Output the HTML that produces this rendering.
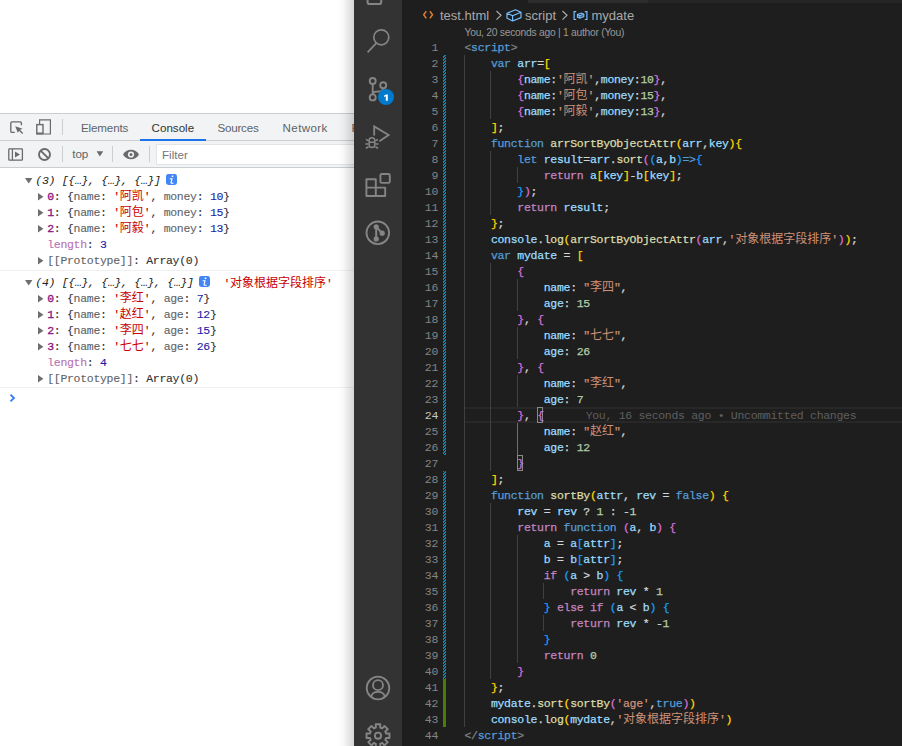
<!DOCTYPE html>
<html><head><meta charset="utf-8"><title>console / editor</title>
<style>
*{box-sizing:border-box}
html,body{margin:0;padding:0}
body{width:902px;height:746px;overflow:hidden;position:relative;background:#fff;font-family:"Liberation Sans",sans-serif}
.ab{position:absolute}
#dt{position:absolute;left:0;top:0;width:354px;height:746px;overflow:hidden;background:#fff}
#dt .bar{position:absolute;left:0;width:354px;background:#f1f3f4;border-top:1px solid #cbcdd1}
.tab{position:absolute;top:121px;font-size:11.6px;line-height:14px;color:#5f6368;white-space:nowrap}
.vs{position:absolute;width:1px;background:#cbcdd1}
.cr{position:absolute;height:16px;line-height:16px;font-family:"Liberation Mono","Noto Sans CJK SC",monospace;font-size:11.5px;letter-spacing:-0.3px;color:#303030;white-space:pre;padding-top:1px;-webkit-text-stroke:0.1px}
.ch{font-style:italic;color:#222;-webkit-text-stroke:0}
.ci{color:#881280;-webkit-text-stroke:0.3px}
.cn{color:#5f6368}
.cs{color:#c80000}
.cv{color:#1a1aa6}
.cl2{color:#b871b3}
.cp{color:#5f6368}
.zh{font-family:"Liberation Mono","Noto Sans CJK SC",monospace;font-size:12px;letter-spacing:0;-webkit-text-stroke:0}
.sep{position:absolute;left:0;width:354px;height:1px;background:#f0f0f0}
.inf{position:absolute;width:11px;height:11px;border-radius:2.5px;background:#4285f4;color:#fff;text-align:center;font:italic bold 10px/10px "Liberation Mono",monospace}
#shadow{position:absolute;left:338px;top:0;width:16px;height:746px;background:linear-gradient(90deg,rgba(0,0,0,0),rgba(0,0,0,.03) 35%,rgba(0,0,0,.16))}
#vs{position:absolute;left:354px;top:0;width:548px;height:746px;background:#1e1e1e;overflow:hidden}
#ab{position:absolute;left:0;top:0;width:48px;height:746px;background:#333}
#ed{position:absolute;left:-354px;top:0;width:902px;height:746px}
.bc{position:absolute;top:7px;height:18px;line-height:18px;font-size:13px;color:#a9a9a9;white-space:nowrap}
.lens{position:absolute;left:464.5px;top:26px;height:14px;line-height:14px;font-size:10.3px;letter-spacing:-0.26px;color:#999;white-space:nowrap}
.ln{position:absolute;left:402px;width:36px;height:16px;line-height:16px;padding-top:1px;text-align:right;font-family:"Liberation Mono",monospace;font-size:11.5px;letter-spacing:-0.3px;color:#858585}
.ln.cur{color:#c6c6c6}
.cl{position:absolute;left:464.5px;height:16px;line-height:16px;padding-top:1px;font-family:"Liberation Mono","Noto Sans CJK SC",monospace;font-size:11.5px;letter-spacing:-0.3px;color:#d4d4d4;white-space:pre;-webkit-text-stroke:0.25px}
.t{color:#808080}.k{color:#569cd6}.c{color:#c586c0}.v{color:#9cdcfe}.f{color:#dcdcaa}.s{color:#ce9178}.n{color:#b5cea8}.p{color:#d4d4d4}
.b1{color:#ffd700}.b2{color:#da70d6}.b3{color:#179fff}
.bm{position:absolute;width:6px;height:16px;border:1px solid #888;background:rgba(0,100,0,.1)}
.gh{color:#5e5e5e;margin-left:41.9px;-webkit-text-stroke:0}
.ig{position:absolute;width:1px;background:#404040}
.iga{background:#707070}
.gm{position:absolute;left:443px;width:3px;background:repeating-linear-gradient(-45deg,#1b81a8 0,#1b81a8 1.4px,#1e3c48 1.4px,#1e3c48 2.83px)}
.ga{position:absolute;left:443px;width:3px;background:#487e02}
#hl{position:absolute;left:465px;top:407px;width:437px;height:16px;border-top:2px solid #282828;border-bottom:2px solid #282828}
</style></head><body>
<div id="dt">
<div class="bar" style="top:113px;height:28px"></div><div class="bar" style="top:140px;height:27px"></div><div class="bar" style="top:167px;height:1px;background:#fff"></div><svg class="ab" style="left:0;top:113px" width="354" height="55" viewBox="0 113 354 55" fill="none" stroke="#6a6a6a" stroke-width="1.5"><path d="M14.8 132.4H12Q10.8 132.4 10.8 131.2V123Q10.8 121.8 12 121.8H20.2Q21.4 121.8 21.4 123V125.2" stroke-width="1.35"/><path d="M15.2 126.2L22.6 128.7L19.7 130L17.8 132.8Z" fill="#6a6a6a" stroke="none"/><path d="M19 129.8L22.7 133.5" stroke-width="1.4"/><path d="M39.6 124V119.8H50.4V134H43.6" stroke-width="1.2"/><rect x="36.8" y="124.6" width="6.2" height="9.4" stroke-width="1.4"/><path d="M36.8 133.2H43" stroke-width="1.4"/><rect x="8.8" y="148.8" width="13.6" height="11.4" rx="0.6" stroke-width="1.3"/><path d="M12.4 148.8V160.2" stroke-width="1.3"/><path d="M15 151.4L20 154.5L15 157.6Z" fill="#6a6a6a" stroke="none"/><circle cx="44.5" cy="154.5" r="5.5" stroke-width="1.9"/><path d="M40.6 150.6L48.4 158.4" stroke-width="1.9"/><path d="M123 154.5C126 148.2 136 148.2 139 154.5C136 160.8 126 160.8 123 154.5Z" fill="#6a6a6a" stroke="none"/><circle cx="131" cy="154.5" r="3.1" fill="#f1f3f4" stroke="none"/><circle cx="131" cy="154.5" r="1.5" fill="#6a6a6a" stroke="none"/><path d="M96.6 151.2H103.2L99.9 156.4Z" fill="#6a6a6a" stroke="none"/></svg><div class="vs" style="left:62px;top:119px;height:16px"></div><div class="vs" style="left:62px;top:146px;height:16px"></div><div class="vs" style="left:112px;top:146px;height:16px"></div><div class="vs" style="left:149px;top:146px;height:16px"></div><div class="tab" style="left:81px;letter-spacing:-0.14px">Elements</div><div class="tab" style="left:151.6px;color:#333">Console</div><div class="tab" style="left:217.4px;letter-spacing:-0.2px">Sources</div><div class="tab" style="left:282.6px;letter-spacing:0.37px">Network</div><div class="tab" style="left:351.6px">Performance</div><div class="ab" style="left:140px;top:139px;width:66px;height:2px;background:#1a73e8"></div><div class="tab" style="left:72.2px;top:147px">top</div><div class="ab" style="left:156px;top:144px;width:220px;height:21px;background:#fff;border:1px solid #e3e4e6"></div><div class="tab" style="left:162px;top:148px;color:#757575">Filter</div>
<svg class="ab" style="left:25px;top:178px" width="8" height="6" viewBox="0 0 8 6"><path d="M0 0H7.4L3.7 5.6Z" fill="#6e6e6e"/></svg>
<div class="cr" style="top:172px;left:35.3px"><span class="ch">(3) [{…}, {…}, {…}]</span></div>
<svg class="ab" style="left:166px;top:174px" width="11" height="11" viewBox="0 0 11 11"><rect width="11" height="11" rx="2.4" fill="#4285f4"/><rect x="5.7" y="1.5" width="1.6" height="1.6" fill="#fff"/><path d="M3.7 4.7H6L5.1 8.4Q4.9 9.2 5.8 9.2H7.6" fill="none" stroke="#fff" stroke-width="1.15"/></svg>
<svg class="ab" style="left:38px;top:192.5px" width="6" height="8" viewBox="0 0 6 8"><path d="M0 0V7.4L5.4 3.7Z" fill="#6e6e6e"/></svg>
<div class="cr" style="top:188px;left:47.2px"><span class="ci">0</span>: {<span class="cn">name</span>: <span class="cs">'<span class="zh">阿凯</span>'</span>, <span class="cn">money</span>: <span class="cv">10</span>}</div>
<svg class="ab" style="left:38px;top:208.5px" width="6" height="8" viewBox="0 0 6 8"><path d="M0 0V7.4L5.4 3.7Z" fill="#6e6e6e"/></svg>
<div class="cr" style="top:204px;left:47.2px"><span class="ci">1</span>: {<span class="cn">name</span>: <span class="cs">'<span class="zh">阿包</span>'</span>, <span class="cn">money</span>: <span class="cv">15</span>}</div>
<svg class="ab" style="left:38px;top:224.5px" width="6" height="8" viewBox="0 0 6 8"><path d="M0 0V7.4L5.4 3.7Z" fill="#6e6e6e"/></svg>
<div class="cr" style="top:220px;left:47.2px"><span class="ci">2</span>: {<span class="cn">name</span>: <span class="cs">'<span class="zh">阿毅</span>'</span>, <span class="cn">money</span>: <span class="cv">13</span>}</div>
<div class="cr" style="top:236px;left:47.2px"><span class="cl2">length</span>: <span class="cv">3</span></div>
<svg class="ab" style="left:38px;top:256.5px" width="6" height="8" viewBox="0 0 6 8"><path d="M0 0V7.4L5.4 3.7Z" fill="#6e6e6e"/></svg>
<div class="cr" style="top:252px;left:47.2px"><span class="cp">[[Prototype]]</span>: Array(0)</div>
<div class="sep" style="top:270px"></div>
<svg class="ab" style="left:25px;top:280px" width="8" height="6" viewBox="0 0 8 6"><path d="M0 0H7.4L3.7 5.6Z" fill="#6e6e6e"/></svg>
<div class="cr" style="top:274px;left:35.3px"><span class="ch">(4) [{…}, {…}, {…}, {…}]</span></div>
<svg class="ab" style="left:199px;top:276px" width="11" height="11" viewBox="0 0 11 11"><rect width="11" height="11" rx="2.4" fill="#4285f4"/><rect x="5.7" y="1.5" width="1.6" height="1.6" fill="#fff"/><path d="M3.7 4.7H6L5.1 8.4Q4.9 9.2 5.8 9.2H7.6" fill="none" stroke="#fff" stroke-width="1.15"/></svg>
<div class="cr" style="top:275px;left:223.4px"><span class="cs">'<span class="zh">对象根据字段排序</span>'</span></div>
<svg class="ab" style="left:38px;top:294.5px" width="6" height="8" viewBox="0 0 6 8"><path d="M0 0V7.4L5.4 3.7Z" fill="#6e6e6e"/></svg>
<div class="cr" style="top:290px;left:47.2px"><span class="ci">0</span>: {<span class="cn">name</span>: <span class="cs">'<span class="zh">李红</span>'</span>, <span class="cn">age</span>: <span class="cv">7</span>}</div>
<svg class="ab" style="left:38px;top:310.5px" width="6" height="8" viewBox="0 0 6 8"><path d="M0 0V7.4L5.4 3.7Z" fill="#6e6e6e"/></svg>
<div class="cr" style="top:306px;left:47.2px"><span class="ci">1</span>: {<span class="cn">name</span>: <span class="cs">'<span class="zh">赵红</span>'</span>, <span class="cn">age</span>: <span class="cv">12</span>}</div>
<svg class="ab" style="left:38px;top:326.5px" width="6" height="8" viewBox="0 0 6 8"><path d="M0 0V7.4L5.4 3.7Z" fill="#6e6e6e"/></svg>
<div class="cr" style="top:322px;left:47.2px"><span class="ci">2</span>: {<span class="cn">name</span>: <span class="cs">'<span class="zh">李四</span>'</span>, <span class="cn">age</span>: <span class="cv">15</span>}</div>
<svg class="ab" style="left:38px;top:342.5px" width="6" height="8" viewBox="0 0 6 8"><path d="M0 0V7.4L5.4 3.7Z" fill="#6e6e6e"/></svg>
<div class="cr" style="top:338px;left:47.2px"><span class="ci">3</span>: {<span class="cn">name</span>: <span class="cs">'<span class="zh">七七</span>'</span>, <span class="cn">age</span>: <span class="cv">26</span>}</div>
<div class="cr" style="top:354px;left:47.2px"><span class="cl2">length</span>: <span class="cv">4</span></div>
<svg class="ab" style="left:38px;top:374.5px" width="6" height="8" viewBox="0 0 6 8"><path d="M0 0V7.4L5.4 3.7Z" fill="#6e6e6e"/></svg>
<div class="cr" style="top:370px;left:47.2px"><span class="cp">[[Prototype]]</span>: Array(0)</div>
<div class="sep" style="top:387px"></div>
<svg class="ab" style="left:9px;top:393px" width="8" height="10" viewBox="0 0 8 10"><path d="M1.5 1.6L5 5L1.5 8.4" fill="none" stroke="#367cf1" stroke-width="1.8"/></svg>
</div>
<div id="shadow"></div>
<div id="vs">
<div id="ed">
<div class="ab" style="left:528px;top:0;width:374px;height:3px;background:#252526"></div>
<div class="ab" style="left:528px;top:0;width:120px;height:3px;background:#2d2d2d"></div>
<svg class="ab" style="left:422.4px;top:9px" width="13" height="12" viewBox="0 0 13 12" fill="none" stroke="#e37933" stroke-width="1.5"><path d="M4.3 2.2L1.7 5.8L4.3 9.4M7.9 2.2L10.5 5.8L7.9 9.4"/></svg><div class="bc" style="left:440px">test.html</div><svg class="ab" style="left:495px;top:10px" width="8" height="11" viewBox="0 0 8 11" fill="none" stroke="#a9a9a9" stroke-width="1.2"><path d="M1.5 1L6 5.3L1.5 9.6"/></svg><svg class="ab" style="left:506px;top:9px" width="16" height="13" viewBox="0 0 16 13" fill="none" stroke="#75beff" stroke-width="1.2" stroke-linejoin="round"><path d="M1 4.2L9.5 0.8L15 3.2V8.6L6.6 12L1 9.2ZM1 4.2L6.6 6.8L15 3.2M6.6 6.8V12"/></svg><div class="bc" style="left:525px">script</div><svg class="ab" style="left:561px;top:10px" width="8" height="11" viewBox="0 0 8 11" fill="none" stroke="#a9a9a9" stroke-width="1.2"><path d="M1.5 1L6 5.3L1.5 9.6"/></svg><svg class="ab" style="left:572.5px;top:10px" width="15" height="11" viewBox="0 0 15 11" fill="none" stroke="#75beff" stroke-width="1.2"><path d="M3.2 1.7H1.1V9.5H3.2M11.8 1.7H13.9V9.5H11.8"/><path d="M4.4 4.6L8.4 3L10.8 4.1V6.6L6.8 8.2L4.4 7.1ZM4.4 4.6L6.8 5.7L10.8 4.1M6.8 5.7V8.2" stroke-width="1.1" fill="rgba(117,190,255,.35)"/></svg><div class="bc" style="left:591.5px">mydate</div>
<div class="lens">You, 20 seconds ago | 1 author (You)</div>
<div id="hl"></div><div class="bm" style="left:537px;top:407px"></div><div class="bm" style="left:517px;top:455px"></div>
<div class="ig" style="left:464px;top:55px;height:672px"></div><div class="ig" style="left:490px;top:71px;height:48px"></div><div class="ig" style="left:490px;top:151px;height:64px"></div><div class="ig" style="left:490px;top:263px;height:208px"></div><div class="ig" style="left:490px;top:503px;height:176px"></div><div class="ig" style="left:517px;top:167px;height:16px"></div><div class="ig" style="left:517px;top:279px;height:32px"></div><div class="ig" style="left:517px;top:327px;height:32px"></div><div class="ig" style="left:517px;top:375px;height:32px"></div><div class="ig" style="left:517px;top:535px;height:128px"></div><div class="ig iga" style="left:517px;top:423px;height:32px"></div><div class="ig" style="left:543px;top:583px;height:16px"></div><div class="ig" style="left:543px;top:615px;height:16px"></div>
<svg class="ab" style="left:443px;top:0" width="3" height="746" shape-rendering="crispEdges"><defs><pattern id="hp" width="3" height="3" patternUnits="userSpaceOnUse" patternTransform="translate(0 55)"><rect width="3" height="3" fill="#1b81a8"/><rect x="0" y="0" width="1" height="1" fill="#1e1e1e"/><rect x="2" y="1" width="1" height="1" fill="#1e1e1e"/><rect x="1" y="2" width="1" height="1" fill="#1e1e1e"/></pattern></defs><rect x="0" y="55" width="3" height="400" fill="url(#hp)"/><rect x="0" y="471" width="3" height="208" fill="url(#hp)"/><rect x="0" y="679" width="3" height="48" fill="#487e02"/></svg>
<div class="ln" style="top:39px">1</div>
<div class="cl" style="top:39px"><span class="t">&lt;</span><span class="k">script</span><span class="t">&gt;</span></div>
<div class="ln" style="top:55px">2</div>
<div class="cl" style="top:55px">    <span class="k">var</span> <span class="v">arr</span><span class="p">=</span><span class="b1">[</span></div>
<div class="ln" style="top:71px">3</div>
<div class="cl" style="top:71px">        <span class="b2">{</span><span class="v">name</span><span class="p">:</span><span class="s">'<span class="zh">阿凯</span>'</span><span class="p">,</span><span class="v">money</span><span class="p">:</span><span class="n">10</span><span class="b2">}</span><span class="p">,</span></div>
<div class="ln" style="top:87px">4</div>
<div class="cl" style="top:87px">        <span class="b2">{</span><span class="v">name</span><span class="p">:</span><span class="s">'<span class="zh">阿包</span>'</span><span class="p">,</span><span class="v">money</span><span class="p">:</span><span class="n">15</span><span class="b2">}</span><span class="p">,</span></div>
<div class="ln" style="top:103px">5</div>
<div class="cl" style="top:103px">        <span class="b2">{</span><span class="v">name</span><span class="p">:</span><span class="s">'<span class="zh">阿毅</span>'</span><span class="p">,</span><span class="v">money</span><span class="p">:</span><span class="n">13</span><span class="b2">}</span><span class="p">,</span></div>
<div class="ln" style="top:119px">6</div>
<div class="cl" style="top:119px">    <span class="b1">]</span><span class="p">;</span></div>
<div class="ln" style="top:135px">7</div>
<div class="cl" style="top:135px">    <span class="k">function</span> <span class="f">arrSortByObjectAttr</span><span class="b1">(</span><span class="v">arr</span><span class="p">,</span><span class="v">key</span><span class="b1">)</span><span class="b1">{</span></div>
<div class="ln" style="top:151px">8</div>
<div class="cl" style="top:151px">        <span class="k">let</span> <span class="v">result</span><span class="p">=</span><span class="v">arr</span><span class="p">.</span><span class="f">sort</span><span class="b2">(</span><span class="b3">(</span><span class="v">a</span><span class="p">,</span><span class="v">b</span><span class="b3">)</span><span class="k">=&gt;</span><span class="b3">{</span></div>
<div class="ln" style="top:167px">9</div>
<div class="cl" style="top:167px">            <span class="c">return</span> <span class="v">a</span><span class="b1">[</span><span class="v">key</span><span class="b1">]</span><span class="p">-</span><span class="v">b</span><span class="b1">[</span><span class="v">key</span><span class="b1">]</span><span class="p">;</span></div>
<div class="ln" style="top:183px">10</div>
<div class="cl" style="top:183px">        <span class="b3">}</span><span class="b2">)</span><span class="p">;</span></div>
<div class="ln" style="top:199px">11</div>
<div class="cl" style="top:199px">        <span class="c">return</span> <span class="v">result</span><span class="p">;</span></div>
<div class="ln" style="top:215px">12</div>
<div class="cl" style="top:215px">    <span class="b1">}</span><span class="p">;</span></div>
<div class="ln" style="top:231px">13</div>
<div class="cl" style="top:231px">    <span class="v">console</span><span class="p">.</span><span class="f">log</span><span class="b1">(</span><span class="f">arrSortByObjectAttr</span><span class="b2">(</span><span class="v">arr</span><span class="p">,</span><span class="s">'<span class="zh">对象根据字段排序</span>'</span><span class="b2">)</span><span class="b1">)</span><span class="p">;</span></div>
<div class="ln" style="top:247px">14</div>
<div class="cl" style="top:247px">    <span class="k">var</span> <span class="v">mydate</span><span class="p"> = </span><span class="b1">[</span></div>
<div class="ln" style="top:263px">15</div>
<div class="cl" style="top:263px">        <span class="b2">{</span></div>
<div class="ln" style="top:279px">16</div>
<div class="cl" style="top:279px">            <span class="v">name</span><span class="p">: </span><span class="s">"<span class="zh">李四</span>"</span><span class="p">,</span></div>
<div class="ln" style="top:295px">17</div>
<div class="cl" style="top:295px">            <span class="v">age</span><span class="p">: </span><span class="n">15</span></div>
<div class="ln" style="top:311px">18</div>
<div class="cl" style="top:311px">        <span class="b2">}</span><span class="p">, </span><span class="b2">{</span></div>
<div class="ln" style="top:327px">19</div>
<div class="cl" style="top:327px">            <span class="v">name</span><span class="p">: </span><span class="s">"<span class="zh">七七</span>"</span><span class="p">,</span></div>
<div class="ln" style="top:343px">20</div>
<div class="cl" style="top:343px">            <span class="v">age</span><span class="p">: </span><span class="n">26</span></div>
<div class="ln" style="top:359px">21</div>
<div class="cl" style="top:359px">        <span class="b2">}</span><span class="p">, </span><span class="b2">{</span></div>
<div class="ln" style="top:375px">22</div>
<div class="cl" style="top:375px">            <span class="v">name</span><span class="p">: </span><span class="s">"<span class="zh">李红</span>"</span><span class="p">,</span></div>
<div class="ln" style="top:391px">23</div>
<div class="cl" style="top:391px">            <span class="v">age</span><span class="p">: </span><span class="n">7</span></div>
<div class="ln cur" style="top:407px">24</div>
<div class="cl" style="top:407px">        <span class="b2">}</span><span class="p">, </span><span class="b2">{</span><span class="gh">You, 16 seconds ago • Uncommitted changes</span></div>
<div class="ln" style="top:423px">25</div>
<div class="cl" style="top:423px">            <span class="v">name</span><span class="p">: </span><span class="s">"<span class="zh">赵红</span>"</span><span class="p">,</span></div>
<div class="ln" style="top:439px">26</div>
<div class="cl" style="top:439px">            <span class="v">age</span><span class="p">: </span><span class="n">12</span></div>
<div class="ln" style="top:455px">27</div>
<div class="cl" style="top:455px">        <span class="b2">}</span></div>
<div class="ln" style="top:471px">28</div>
<div class="cl" style="top:471px">    <span class="b1">]</span><span class="p">;</span></div>
<div class="ln" style="top:487px">29</div>
<div class="cl" style="top:487px">    <span class="k">function</span> <span class="f">sortBy</span><span class="b1">(</span><span class="v">attr</span><span class="p">, </span><span class="v">rev</span><span class="p"> = </span><span class="k">false</span><span class="b1">)</span> <span class="b1">{</span></div>
<div class="ln" style="top:503px">30</div>
<div class="cl" style="top:503px">        <span class="v">rev</span><span class="p"> = </span><span class="v">rev</span><span class="p"> ? </span><span class="n">1</span><span class="p"> : -</span><span class="n">1</span></div>
<div class="ln" style="top:519px">31</div>
<div class="cl" style="top:519px">        <span class="c">return</span> <span class="k">function</span> <span class="b2">(</span><span class="v">a</span><span class="p">, </span><span class="v">b</span><span class="b2">)</span> <span class="b2">{</span></div>
<div class="ln" style="top:535px">32</div>
<div class="cl" style="top:535px">            <span class="v">a</span><span class="p"> = </span><span class="v">a</span><span class="b3">[</span><span class="v">attr</span><span class="b3">]</span><span class="p">;</span></div>
<div class="ln" style="top:551px">33</div>
<div class="cl" style="top:551px">            <span class="v">b</span><span class="p"> = </span><span class="v">b</span><span class="b3">[</span><span class="v">attr</span><span class="b3">]</span><span class="p">;</span></div>
<div class="ln" style="top:567px">34</div>
<div class="cl" style="top:567px">            <span class="c">if</span> <span class="b3">(</span><span class="v">a</span><span class="p"> &gt; </span><span class="v">b</span><span class="b3">)</span> <span class="b3">{</span></div>
<div class="ln" style="top:583px">35</div>
<div class="cl" style="top:583px">                <span class="c">return</span> <span class="v">rev</span><span class="p"> * </span><span class="n">1</span></div>
<div class="ln" style="top:599px">36</div>
<div class="cl" style="top:599px">            <span class="b3">}</span> <span class="c">else</span> <span class="c">if</span> <span class="b3">(</span><span class="v">a</span><span class="p"> &lt; </span><span class="v">b</span><span class="b3">)</span> <span class="b3">{</span></div>
<div class="ln" style="top:615px">37</div>
<div class="cl" style="top:615px">                <span class="c">return</span> <span class="v">rev</span><span class="p"> * -</span><span class="n">1</span></div>
<div class="ln" style="top:631px">38</div>
<div class="cl" style="top:631px">            <span class="b3">}</span></div>
<div class="ln" style="top:647px">39</div>
<div class="cl" style="top:647px">            <span class="c">return</span> <span class="n">0</span></div>
<div class="ln" style="top:663px">40</div>
<div class="cl" style="top:663px">        <span class="b2">}</span></div>
<div class="ln" style="top:679px">41</div>
<div class="cl" style="top:679px">    <span class="b1">}</span><span class="p">;</span></div>
<div class="ln" style="top:695px">42</div>
<div class="cl" style="top:695px">    <span class="v">mydate</span><span class="p">.</span><span class="f">sort</span><span class="b1">(</span><span class="f">sortBy</span><span class="b2">(</span><span class="s">'age'</span><span class="p">,</span><span class="k">true</span><span class="b2">)</span><span class="b1">)</span></div>
<div class="ln" style="top:711px">43</div>
<div class="cl" style="top:711px">    <span class="v">console</span><span class="p">.</span><span class="f">log</span><span class="b1">(</span><span class="v">mydate</span><span class="p">,</span><span class="s">'<span class="zh">对象根据字段排序</span>'</span><span class="b1">)</span></div>
<div class="ln" style="top:727px">44</div>
<div class="cl" style="top:727px"><span class="t">&lt;/</span><span class="k">script</span><span class="t">&gt;</span></div>
</div>
<div id="ab"><svg class="ab" style="left:0;top:0" width="48" height="746" viewBox="354 0 48 746" fill="none" stroke="#858585" stroke-width="1.7"><path d="M367.6 0V2.3Q367.6 4.1 369.4 4.1H379.4Q381.2 4.1 381.2 2.3V0" stroke-width="2"/><circle cx="381.3" cy="37.3" r="7.5"/><path d="M376.3 43.2L367.6 52.4"/><g stroke-width="1.9"><circle cx="372.7" cy="81" r="3"/><circle cx="372.7" cy="97.4" r="3"/><circle cx="383.2" cy="85.2" r="3"/><path d="M372.7 84V94.4M383.2 88.2C383.2 91.4 380.5 91.6 376.5 91.6C374.5 91.6 373 92.4 372.7 94"/></g><path d="M374.2 135.4V126.4L388.6 135.1L379.4 141.2" stroke-width="1.8"/><rect x="369.1" y="137.8" width="5.7" height="9.8" rx="2.85" stroke-width="1.5"/><path d="M369 142.2H375M368.5 140.7L365.9 139.4M368.6 144H365.4M368.5 146.8L365.9 148.3M375.4 140.7L378 139.4M375.3 144H378.5M375.4 146.8L378 148.3" stroke-width="1.6"/><path d="M366.4 179.2H375.8V196H366.4ZM375.8 187.6H385.2V196H375.8M366.4 187.6H375.8" stroke-linejoin="round" stroke-width="1.9"/><rect x="380.4" y="174" width="9.4" height="8.9" rx="1.4" stroke-width="1.9"/><circle cx="377.8" cy="232.8" r="11.3" stroke-width="1.9"/><path d="M376.2 226.8V238.9M376.2 226.8L382.2 233.2" stroke-width="2"/><g fill="#858585" stroke="none"><circle cx="376.2" cy="226.8" r="2.6"/><circle cx="376.2" cy="238.9" r="2.6"/><circle cx="382.2" cy="233.2" r="2.6"/></g><circle cx="378" cy="688" r="11.3" stroke-width="1.8"/><circle cx="378" cy="685.2" r="5" stroke-width="1.8"/><path d="M371 696.8C371.8 693.2 374.6 691.8 378 691.8C381.4 691.8 384.2 693.2 385 696.8" stroke-width="1.8"/><path d="M375.84 727.58 L375.68 724.23 L380.32 724.23 L380.16 727.58 L382.21 728.43 L384.46 725.95 L387.75 729.24 L385.27 731.49 L386.12 733.54 L389.47 733.38 L389.47 738.02 L386.12 737.86 L385.27 739.91 L387.75 742.16 L384.46 745.45 L382.21 742.97 L380.16 743.82 L380.32 747.17 L375.68 747.17 L375.84 743.82 L373.79 742.97 L371.54 745.45 L368.25 742.16 L370.73 739.91 L369.88 737.86 L366.53 738.02 L366.53 733.38 L369.88 733.54 L370.73 731.49 L368.25 729.24 L371.54 725.95 L373.79 728.43Z" stroke-width="1.9" stroke-linejoin="round"/><circle cx="378" cy="735.7" r="3.1" stroke-width="1.9"/></svg><svg class="ab" style="left:24px;top:89px" width="16" height="16" viewBox="378 89 16 16"><circle cx="386" cy="97" r="8" fill="#007acc"/><path d="M385.8 100.8V96.3L384.2 97.1L383.9 95.7L386.3 94.4H387.8V100.8Z" fill="#fff"/></svg></div>
</div>
</body></html>
